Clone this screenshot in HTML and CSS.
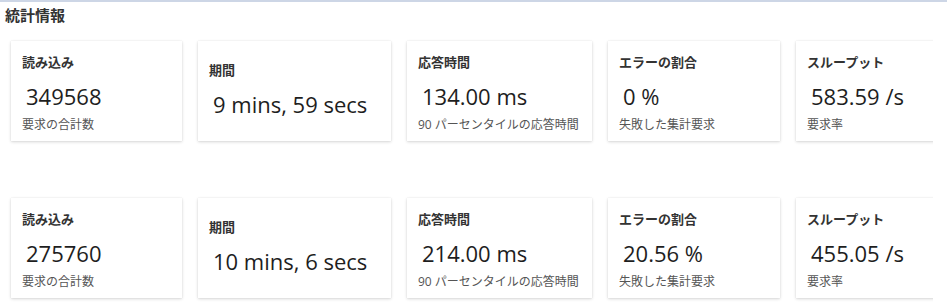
FILE: index.html
```html
<!DOCTYPE html>
<html lang="ja">
<head>
<meta charset="utf-8">
<title>統計情報</title>
<link rel="stylesheet" href="styles.css">
</head>
<body>
<div class="panel">
  <h2 class="title">統計情報</h2>
  <div class="row">
    <div class="cards">
      <div class="card">
        <div class="label">読み込み</div>
        <div class="value">349568</div>
        <div class="sub">要求の合計数</div>
      </div>
      <div class="card card--nosub">
        <div class="label">期間</div>
        <div class="value">9 mins, 59 secs</div>
      </div>
      <div class="card">
        <div class="label">応答時間</div>
        <div class="value">134.00 ms</div>
        <div class="sub">90 パーセンタイルの応答時間</div>
      </div>
      <div class="card">
        <div class="label">エラーの割合</div>
        <div class="value">0 %</div>
        <div class="sub">失敗した集計要求</div>
      </div>
      <div class="card">
        <div class="label">スループット</div>
        <div class="value">583.59 /s</div>
        <div class="sub">要求率</div>
      </div>
    </div>
  </div>
  <div class="row row--second">
    <div class="cards">
      <div class="card">
        <div class="label">読み込み</div>
        <div class="value">275760</div>
        <div class="sub">要求の合計数</div>
      </div>
      <div class="card card--nosub">
        <div class="label">期間</div>
        <div class="value">10 mins, 6 secs</div>
      </div>
      <div class="card">
        <div class="label">応答時間</div>
        <div class="value">214.00 ms</div>
        <div class="sub">90 パーセンタイルの応答時間</div>
      </div>
      <div class="card">
        <div class="label">エラーの割合</div>
        <div class="value">20.56 %</div>
        <div class="sub">失敗した集計要求</div>
      </div>
      <div class="card">
        <div class="label">スループット</div>
        <div class="value">455.05 /s</div>
        <div class="sub">要求率</div>
      </div>
    </div>
  </div>
</div>
</body>
</html>
```
FILE: styles.css
```css
html, body {
  margin: 0;
  padding: 0;
  background: #ffffff;
}

body {
  font-family: "Open Sans", "Noto Sans CJK JP", sans-serif;
  color: #333333;
}

.panel {
  border-top: 2px solid #cdd6e6;
}

.title {
  margin: 3px 0 0 5px;
  font-family: "Noto Sans CJK JP", sans-serif;
  font-size: 15px;
  line-height: 20px;
  font-weight: 700;
  color: #333333;
}

.row {
  width: 933px;
  overflow: hidden;
  margin-top: 11px;
  padding: 5px 0 5px 11px;
  box-sizing: border-box;
}

.row--second {
  margin-top: 47px;
}

.cards {
  display: grid;
  grid-template-columns: 171px 193px 185px 172px 172px;
  column-gap: 16px;
  width: max-content;
}

.card {
  height: 100px;
  box-sizing: border-box;
  padding: 11px 10px 0 11px;
  background: #ffffff;
  box-shadow: 0 1px 3px rgba(0, 0, 0, 0.16), 0 0 1px rgba(0, 0, 0, 0.10);
  display: flex;
  flex-direction: column;
}

.card--nosub {
  padding-top: 19px;
}

.label {
  font-family: "Noto Sans CJK JP", sans-serif;
  font-size: 13px;
  line-height: 20px;
  font-weight: 700;
  color: #333333;
}

.value {
  margin: 9px 0 0 4px;
  font-family: "Open Sans", sans-serif;
  font-size: 22px;
  line-height: 30px;
  color: #1e1e1e;
  white-space: nowrap;
}

.sub {
  margin-top: 5px;
  font-family: "Open Sans", "Noto Sans CJK JP", sans-serif;
  font-size: 12px;
  line-height: 18px;
  color: #555555;
  white-space: nowrap;
}
```
